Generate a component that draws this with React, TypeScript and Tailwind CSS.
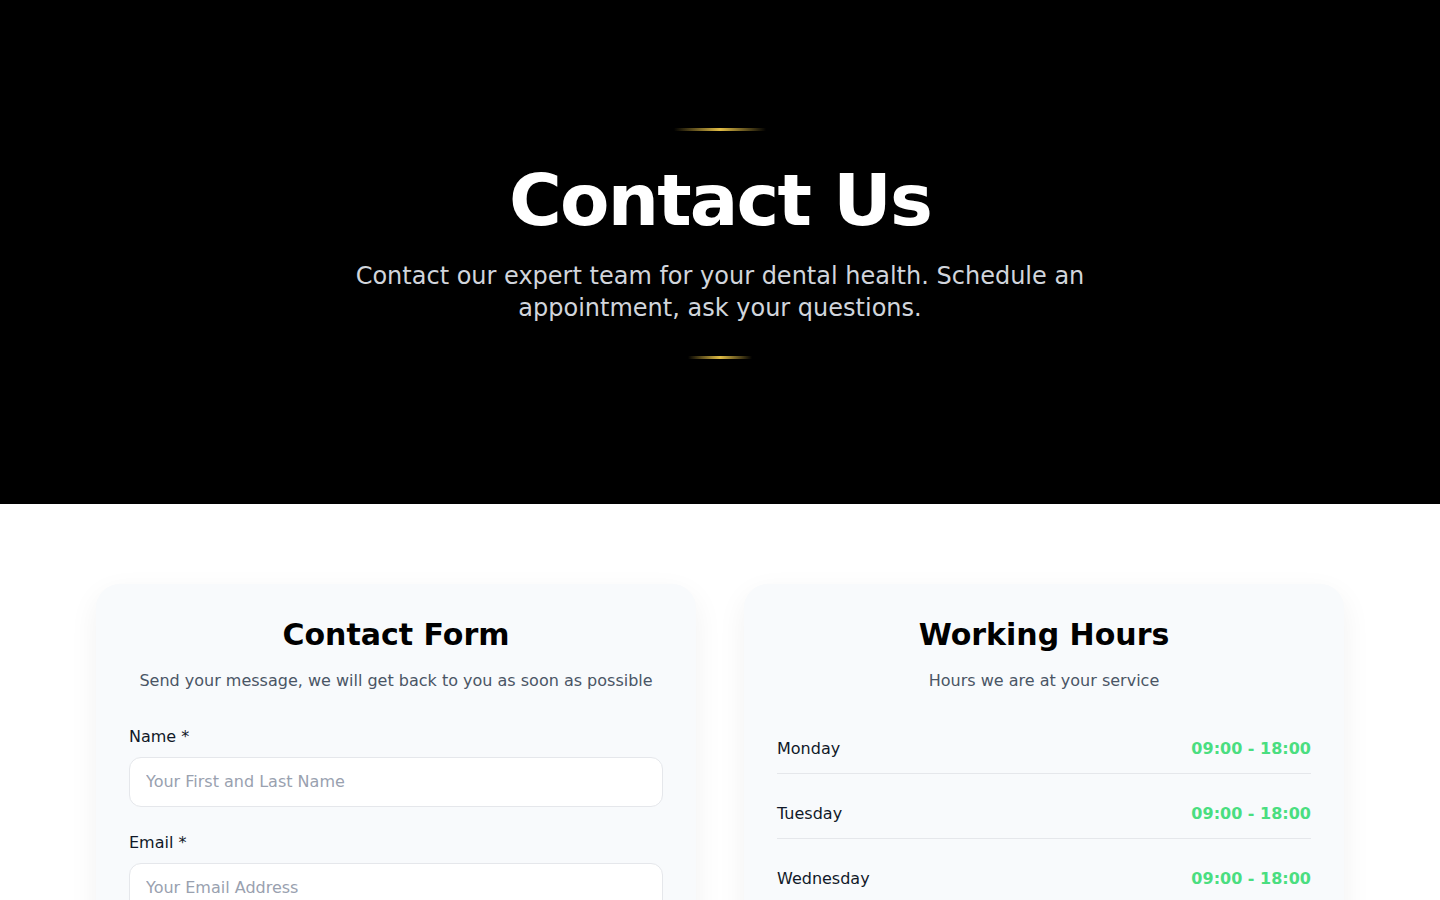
import React from "react";

const font = { fontFamily: '"DejaVu Sans", sans-serif' };

export default function App() {
  const days = [
    ["Monday", "09:00 - 18:00"],
    ["Tuesday", "09:00 - 18:00"],
    ["Wednesday", "09:00 - 18:00"],
    ["Thursday", "09:00 - 18:00"],
    ["Friday", "09:00 - 18:00"],
    ["Saturday", "10:00 - 15:00"],
  ];
  return (
    <div className="min-h-screen bg-white font-['DejaVu_Sans',sans-serif]" style={font}>
      <section className="bg-black pt-32 pb-[145px] flex flex-col items-center text-center">
        <div className="w-[92px] h-[3px] bg-gradient-to-r from-transparent via-[#e2bd45] to-transparent mb-[33px]" />
        <h1 className="text-7xl leading-none tracking-tight font-bold text-white mb-6">Contact Us</h1>
        <p className="max-w-3xl text-2xl leading-8 text-gray-300 px-4">
          Contact our expert team for your dental health. Schedule an appointment, ask your questions.
        </p>
        <div className="w-16 h-[3px] bg-gradient-to-r from-transparent via-[#e2bd45] to-transparent mt-8" />
      </section>

      <section className="py-20">
        <div className="max-w-7xl mx-auto px-4 grid grid-cols-2 gap-12">
          <div className="bg-[#f8fafc] rounded-3xl p-8 border border-[#f8fafc] shadow-[0_10px_30px_rgba(0,0,0,0.06)]">
            <div className="text-center mb-8">
              <h2 className="text-3xl font-bold text-black mb-4">Contact Form</h2>
              <p className="text-base text-gray-600">Send your message, we will get back to you as soon as possible</p>
            </div>
            <form className="space-y-6">
              <div>
                <label className="block text-base text-gray-900 mb-2">Name *</label>
                <input
                  className="w-full bg-white border border-gray-200 rounded-xl px-4 py-3 text-base placeholder:text-gray-400 outline-none"
                  placeholder="Your First and Last Name"
                />
              </div>
              <div>
                <label className="block text-base text-gray-900 mb-2">Email *</label>
                <input
                  className="w-full bg-white border border-gray-200 rounded-xl px-4 py-3 text-base placeholder:text-gray-400 outline-none"
                  placeholder="Your Email Address"
                />
              </div>
              <div>
                <label className="block text-base text-gray-900 mb-2">Phone</label>
                <input
                  className="w-full bg-white border border-gray-200 rounded-xl px-4 py-3 text-base placeholder:text-gray-400 outline-none"
                  placeholder="Your Phone Number"
                />
              </div>
            </form>
          </div>

          <div className="bg-[#f8fafc] rounded-3xl p-8 border border-[#f8fafc] shadow-[0_10px_30px_rgba(0,0,0,0.06)]">
            <div className="text-center mb-8">
              <h2 className="text-3xl font-bold text-black mb-4">Working Hours</h2>
              <p className="text-base text-gray-600">Hours we are at your service</p>
            </div>
            <div className="space-y-4">
              {days.map(([d, t]) => (
                <div key={d} className="flex justify-between items-center py-3 border-b border-gray-200">
                  <span className="text-base text-gray-900">{d}</span>
                  <span className="text-base font-semibold text-[#4ade80]">{t}</span>
                </div>
              ))}
            </div>
          </div>
        </div>
      </section>
    </div>
  );
}
